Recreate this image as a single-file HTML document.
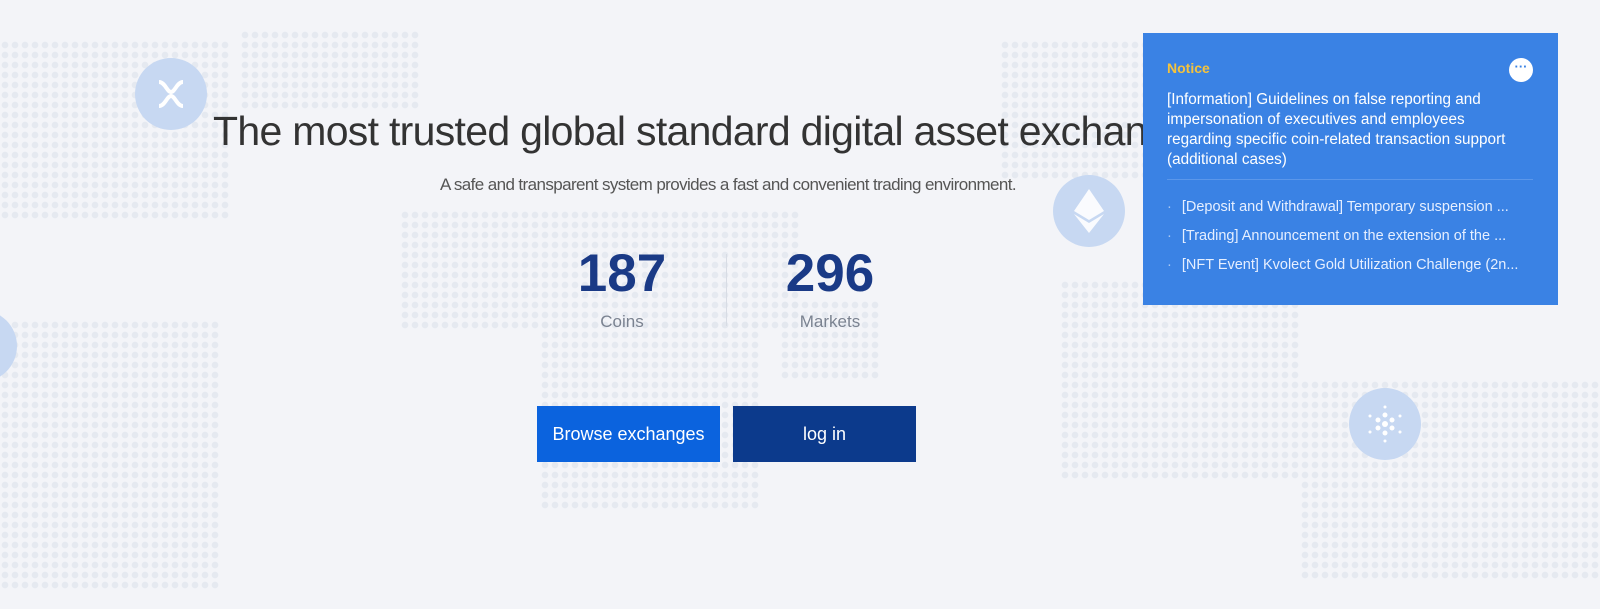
<!DOCTYPE html>
<html><head><style>
html,body{margin:0;padding:0}
body{width:1600px;height:609px;background:#f3f4f8;position:relative;overflow:hidden;font-family:"Liberation Sans",sans-serif}
.m{position:absolute;background-image:radial-gradient(circle,#e2e6ee 3px,transparent 3.6px);background-size:10px 10px;opacity:.8}
.c{position:absolute;border-radius:50%;background:#c7d8f2;display:flex;align-items:center;justify-content:center}
h1{position:absolute;left:213px;top:108px;margin:0;font-weight:normal;font-size:41px;color:#333;letter-spacing:-0.7px;white-space:nowrap}
.sub{position:absolute;left:0;width:1456px;text-align:center;top:175px;font-size:17px;color:#555;letter-spacing:-0.6px}
.n{position:absolute;font-size:53px;font-weight:bold;color:#1a3a86;text-align:center;width:200px;top:243px}
.l{position:absolute;font-size:17px;color:#7a8290;text-align:center;width:200px;top:312px}
.b{position:absolute;top:406px;height:56px;width:183px;color:#fff;font-size:18px;display:flex;align-items:center;justify-content:center}
.p{position:absolute;left:1143px;top:33px;width:415px;height:272px;background:#3a82e4;color:#fff}
.p .t{position:absolute;left:24px;top:27px;color:#f5c33b;font-weight:bold;font-size:14px}
.p .h{position:absolute;left:24px;top:57px;width:365px;font-size:15.3px;line-height:20px}
.p hr{position:absolute;left:24px;top:146px;width:366px;border:0;border-top:1px solid #5b97ea;margin:0}
.p ul{position:absolute;left:24px;top:166px;margin:0;padding:0;list-style:none;font-size:14.5px;color:#e6efff}
.p li{height:29px;white-space:nowrap;overflow:hidden;width:370px}
.p li:before{content:"·";margin-right:10px;color:#aac8f3}
.dot{position:absolute;left:366px;top:25px;width:24px;height:24px;border-radius:50%;background:#fff;color:#3a82e4;font-weight:bold;font-size:13px;text-align:center;line-height:18px}
</style></head><body>
<div class="m" style="left:0;top:40px;width:230px;height:180px"></div>
<div class="m" style="left:240px;top:30px;width:180px;height:80px"></div>
<div class="m" style="left:0;top:320px;width:220px;height:270px"></div>
<div class="m" style="left:400px;top:210px;width:400px;height:120px"></div>
<div class="m" style="left:540px;top:320px;width:220px;height:190px"></div>
<div class="m" style="left:780px;top:300px;width:100px;height:80px"></div>
<div class="m" style="left:1000px;top:40px;width:200px;height:140px"></div>
<div class="m" style="left:1060px;top:280px;width:240px;height:200px"></div>
<div class="m" style="left:1300px;top:380px;width:300px;height:200px"></div>
<div class="c" style="left:135px;top:58px;width:72px;height:72px"><svg width="36" height="36" viewBox="0 0 36 36" fill="none" stroke="#fff" stroke-width="4"><path d="M6 6c6 0 8 10 12 10s6-10 12-10M6 30c6 0 8-10 12-10s6 10 12 10"/></svg></div>
<div class="c" style="left:-55px;top:310px;width:72px;height:72px"></div>
<div class="c" style="left:1053px;top:175px;width:72px;height:72px"><svg width="30" height="44" viewBox="0 0 30 44"><path d="M15 0L0 22l15 9 15-9z" fill="#fff" opacity=".9"/><path d="M15 34L0 25l15 19 15-19z" fill="#fff" opacity=".9"/></svg></div>
<div class="c" style="left:1349px;top:388px;width:72px;height:72px"><svg width="40" height="40" viewBox="0 0 40 40" fill="#fff"><circle cx="20" cy="20" r="3"/><circle cx="13" cy="16" r="2.5"/><circle cx="27" cy="16" r="2.5"/><circle cx="13" cy="24" r="2.5"/><circle cx="27" cy="24" r="2.5"/><circle cx="20" cy="11" r="2.5"/><circle cx="20" cy="29" r="2.5"/><circle cx="20" cy="3" r="1.5"/><circle cx="20" cy="37" r="1.5"/><circle cx="5" cy="12" r="1.5"/><circle cx="35" cy="12" r="1.5"/><circle cx="5" cy="28" r="1.5"/><circle cx="35" cy="28" r="1.5"/></svg></div>
<h1>The most trusted global standard digital asset exchange</h1>
<div class="sub">A safe and transparent system provides a fast and convenient trading environment.</div>
<div class="n" style="left:522px">187</div><div class="l" style="left:522px">Coins</div>
<div style="position:absolute;left:726px;top:254px;width:1px;height:72px;background:#d8dce4"></div>
<div class="n" style="left:730px">296</div><div class="l" style="left:730px">Markets</div>
<div class="b" style="left:537px;background:#0b63de">Browse exchanges</div>
<div class="b" style="left:733px;background:#0c3a8c">log in</div>
<div class="p"><div class="t">Notice</div><div class="dot">···</div>
<div class="h">[Information] Guidelines on false reporting and impersonation of executives and employees regarding specific coin-related transaction support (additional cases)</div>
<hr><ul><li>[Deposit and Withdrawal] Temporary suspension ...</li><li>[Trading] Announcement on the extension of the ...</li><li>[NFT Event] Kvolect Gold Utilization Challenge (2n...</li></ul></div>
</body></html>
